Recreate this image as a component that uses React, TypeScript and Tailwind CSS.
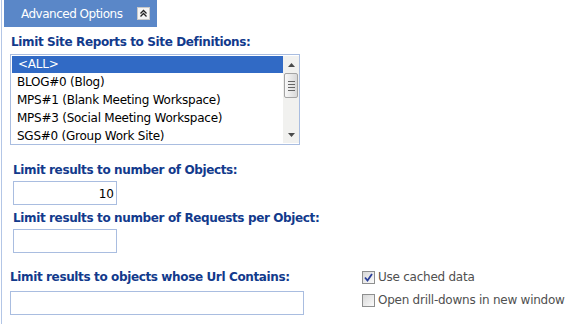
import React from "react";

const font = { fontFamily: "'DejaVu Sans', Verdana, sans-serif" };

function CollapseIcon() {
  return (
    <svg width="13" height="13" viewBox="0 0 13 13">
      <rect x="0.5" y="0.5" width="12" height="12" fill="#f4f4f4" stroke="#c8c8c8" />
      <path d="M3.5 6.5 L6.5 3.5 L9.5 6.5 M3.5 9.5 L6.5 6.5 L9.5 9.5" fill="none" stroke="#222" strokeWidth="1.3" />
    </svg>
  );
}

function Scrollbar() {
  return (
    <div className="flex h-full w-[16px] flex-col bg-[#f1f1ef]">
      <div className="flex h-[17px] items-center justify-center">
        <svg width="7" height="4" viewBox="0 0 7 4"><path d="M0 4 L3.5 0 L7 4 Z" fill="#4a4a4a" /></svg>
      </div>
      <div className="mx-[1px] flex h-[25px] flex-col items-center justify-center gap-[2px] rounded-[2px] border border-[#a4a4a4] bg-gradient-to-r from-[#f8f8f8] to-[#d9d9d9]">
        <div className="h-[1px] w-[7px] bg-[#666]" />
        <div className="h-[1px] w-[7px] bg-[#666]" />
        <div className="h-[1px] w-[7px] bg-[#666]" />
        <div className="h-[1px] w-[7px] bg-[#666]" />
      </div>
      <div className="flex-1" />
      <div className="flex h-[17px] items-center justify-center">
        <svg width="7" height="4" viewBox="0 0 7 4"><path d="M0 0 L3.5 4 L7 0 Z" fill="#4a4a4a" /></svg>
      </div>
    </div>
  );
}

function Checkbox({ checked }: { checked: boolean }) {
  return (
    <div className="flex h-[13px] w-[13px] shrink-0 items-center justify-center border border-[#8e8f8f] bg-gradient-to-br from-[#d8d8d8] to-[#fbfbfb]">
      {checked && (
        <svg width="9" height="9" viewBox="0 0 9 9">
          <path d="M1 4.5 L3.5 7.5 L8 1" fill="none" stroke="#2a3f9a" strokeWidth="1.8" />
        </svg>
      )}
    </div>
  );
}

export default function App() {
  const items = [
    "BLOG#0 (Blog)",
    "MPS#1 (Blank Meeting Workspace)",
    "MPS#3 (Social Meeting Workspace)",
    "SGS#0 (Group Work Site)",
  ];
  const label = "whitespace-nowrap text-[12px] font-bold tracking-[-0.37px] text-[#123a8c] leading-[14px]";
  const inputBorder = "border border-[#a9bde0]";
  return (
    <div className="relative h-[324px] w-[579px] overflow-hidden bg-white" style={font}>
      <div className="absolute left-[1px] top-0 h-full w-[1px] bg-[#b3c6e6]" />
      <div className="ml-[4px] flex h-[27px] w-[153px] items-center bg-[#5a87c8] pl-[17px] pr-[7px]">
        <span className="text-[12px] leading-[14px] tracking-[-0.5px] text-white">Advanced Options</span>
        <div className="ml-auto">
          <CollapseIcon />
        </div>
      </div>
      <div className="pl-[11px] pt-[8px]">
        <div className={label}>Limit Site Reports to Site Definitions:</div>
      </div>
      <div className={`ml-[10px] mt-[5px] flex h-[91px] w-[290px] ${inputBorder} bg-white py-[1px] pl-[1px]`}>
        <div className="flex-1 whitespace-nowrap text-[12px] leading-[18px] tracking-[-0.25px] text-black">
          <div className="h-[17px] bg-[#316ac5] pl-[6px] leading-[17px] text-white">&lt;ALL&gt;</div>
          {items.map((t) => (
            <div key={t} className="h-[18px] pl-[5px]">{t}</div>
          ))}
        </div>
        <Scrollbar />
      </div>
      <div className="pl-[13px] pt-[18px]">
        <div className={label}>Limit results to number of Objects:</div>
        <div className={`mt-[4px] flex h-[24px] w-[104px] items-center justify-end ${inputBorder} pr-[2px] pt-[2px] text-[12px] leading-[14px] text-black`}>10</div>
        <div className={`${label} mt-[6px]`}>Limit results to number of Requests per Object:</div>
        <div className={`mt-[4px] h-[24px] w-[104px] ${inputBorder}`} />
      </div>
      <div className="mt-[17px] flex">
        <div className="pl-[10px]">
          <div className={label}>Limit results to objects whose Url Contains:</div>
          <div className={`mt-[7px] h-[24px] w-[294px] ${inputBorder}`} />
        </div>
        <div className="ml-[58px] flex flex-col gap-[9px] whitespace-nowrap text-[12px] leading-[14px] tracking-[-0.25px] text-[#505050]">
          <div className="flex h-[14px] items-center gap-[3px]"><Checkbox checked /><span>Use cached data</span></div>
          <div className="flex h-[14px] items-center gap-[3px]"><Checkbox checked={false} /><span>Open drill-downs in new window</span></div>
        </div>
      </div>
    </div>
  );
}
